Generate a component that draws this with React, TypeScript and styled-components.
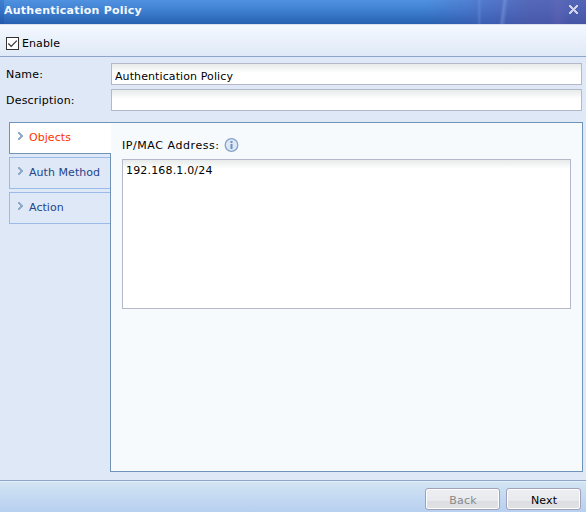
import React, { useState } from "react";
import styled, { createGlobalStyle } from "styled-components";

const Global = createGlobalStyle`
  * { box-sizing: border-box; }
  body { margin: 0; overflow: hidden; }
  body, input, textarea, button { font: 11px/16px "DejaVu Sans", Verdana, sans-serif; color: #000; }
`;

const Dialog = styled.div`
  display: flex;
  flex-direction: column;
  width: 586px;
  height: 512px;
  background: #dfe8f6;
`;

const TitleBar = styled.header`
  flex: none;
  display: flex;
  align-items: flex-start;
  justify-content: space-between;
  height: 24px;
  padding: 2px 7px 0 4px;
  background:
    linear-gradient(97deg, transparent 498px, rgba(160, 190, 245, 0.3) 501px, transparent 505px),
    linear-gradient(90deg, transparent 477px, rgba(140, 170, 230, 0.25) 479px, transparent 482px),
    linear-gradient(90deg, transparent 548px, rgba(140, 110, 190, 0.18) 558px, transparent 569px),
    linear-gradient(90deg, rgba(20, 70, 160, 0.25) 4px, transparent 4px),
    linear-gradient(90deg, transparent 425px, rgba(84, 92, 180, 0.42) 480px, rgba(88, 84, 166, 0.68) 530px, rgba(84, 80, 162, 0.68) 586px),
    linear-gradient(#4f92e0, #3f7fd0 45%, #2660b0);
`;

const Title = styled.h1`
  margin: 0;
  font-size: 11px;
  line-height: 17px;
  letter-spacing: 0.25px;
  color: #f4f8ff;
`;

const CloseButton = styled.button`
  display: flex;
  margin: 2px 0 0;
  padding: 0;
  border: 0;
  background: none;
`;

const Toolbar = styled.div`
  flex: none;
  height: 33px;
  padding: 11px 6px 0;
  border-top: 1px solid #d8e0ee;
  border-bottom: 1px solid #8da6c7;
  background: linear-gradient(#f4f8ff, #dfe9f7);
`;

const CheckLabel = styled.label`
  display: flex;
  gap: 3px;
  line-height: 15px;
  letter-spacing: 0.1px;
`;

const CheckBox = styled.button`
  display: flex;
  width: 13px;
  height: 13px;
  margin-top: 1px;
  padding: 0;
  border: 1px solid #333;
  background: #fff;
`;

const Form = styled.div`
  flex: none;
  display: grid;
  grid-template-columns: 105px 471px;
  grid-auto-rows: 22px;
  row-gap: 4px;
  padding: 6px 0 0 6px;
`;

const FieldLabel = styled.label`
  padding-top: 1px;
  line-height: 22px;
  letter-spacing: 0.2px;
`;

const Field = styled.input`
  width: 100%;
  height: 22px;
  padding: 4px 3px 0;
  border: 1px solid #b5b8c8;
  border-radius: 0;
  outline: none;
  letter-spacing: 0.1px;
  background: linear-gradient(#e7ebea, #fff 9px);
`;

const Body = styled.div`
  flex: none;
  display: flex;
  height: 350px;
  margin: 11px 3px 0 9px;
`;

const Tabs = styled.nav`
  z-index: 1;
  display: flex;
  flex-direction: column;
  gap: 3px;
  width: 102px;
  margin-right: -1px;
`;

const Tab = styled.button<{ $active: boolean }>`
  display: flex;
  align-items: flex-start;
  gap: 6px;
  width: ${p => (p.$active ? 102 : 101)}px;
  height: 32px;
  padding: 7px 0 0 8px;
  border: 1px solid ${p => (p.$active ? "#7093b8" : "#99bbe8")};
  border-right: 0;
  background: ${p => (p.$active ? "#fff" : "#dfe8f6")};
  color: ${p => (p.$active ? "#ff3300" : "#23458b")};
  letter-spacing: 0.05px;
  white-space: nowrap;
`;

const Panel = styled.section`
  flex: 1;
  border: 1px solid #7093b8;
  background: #f6fafd;
  padding: 14px 11px 0;
`;

const PanelLabel = styled.div`
  display: flex;
  align-items: center;
  gap: 4px;
  height: 16px;
`;

const PanelCaption = styled.span`
  padding-top: 1px;
  letter-spacing: 0.57px;
`;

const Addresses = styled.textarea`
  display: block;
  width: 449px;
  height: 150px;
  margin-top: 6px;
  padding: 3px 3px;
  border: 1px solid #b5b8c8;
  outline: none;
  resize: none;
  letter-spacing: 0.17px;
  background: linear-gradient(#e7ebea, #fff 9px);
`;

const Footer = styled.footer`
  flex: none;
  display: flex;
  justify-content: flex-end;
  gap: 6px;
  height: 32px;
  margin-top: 8px;
  padding: 6px 5px 0 0;
  border-top: 1px solid #8da6c7;
  background: linear-gradient(#e5f0fa 1px, #d3e5f3 1px, #c5daf2 15px, #b8d0f0);
`;

const FooterButton = styled.button`
  width: 75px;
  height: 22px;
  margin-top: 1px;
  padding: 3px 0 0 1px;
  border: 1px solid #a0a0b8;
  border-radius: 3px;
  box-shadow: inset 0 0 0 1px #fff;
  letter-spacing: 0.15px;
  background: linear-gradient(#ededf3, #e9eaee 58%, #dcdee2 59%, #e1e2e5);
  &:disabled { color: #888; }
`;

const Arrow = styled.svg`
  display: block;
  margin-top: 2px;
`;

const TabArrow = () => (
  <Arrow width="5" height="9" viewBox="0 0 5 9" shapeRendering="crispEdges">
    <path d="M0 0h2v1h1v1h1v1h1v2h-1v1h-1v1h-1v1h-2v-2h1v-1h1v-2h-1v-1h-1z" fill="#93abcb" />
  </Arrow>
);

const InfoIcon = () => (
  <svg width="15" height="14" viewBox="0 0 15 14">
    <circle cx="7.5" cy="7" r="6.3" fill="#dce8f6" stroke="#86a2c9" strokeWidth="1.3" />
    <path d="M6.5 3h2v2h-2zM6.5 6h2v5h-2z" fill="#6c8fbd" />
  </svg>
);

const tabs = ["Objects", "Auth Method", "Action"];

export default function App() {
  const [enabled, setEnabled] = useState(true);
  const [active, setActive] = useState("Objects");
  return (
    <>
      <Global />
      <Dialog>
        <TitleBar>
          <Title>Authentication Policy</Title>
          <CloseButton aria-label="Close">
            <svg width="11" height="11" viewBox="0 0 11 11" shapeRendering="crispEdges">
              <path
                d="M1 1h2v1h1v1h1v1h1v-1h1v-1h1v-1h2v2h-1v1h-1v1h-1v1h1v1h1v1h1v2h-2v-1h-1v-1h-1v-1h-1v1h-1v1h-1v1h-2v-2h1v-1h1v-1h1v-1h-1v-1h-1v-1h-1z"
                fill="#d0d2ea"
              />
            </svg>
          </CloseButton>
        </TitleBar>
        <Toolbar>
          <CheckLabel>
            <CheckBox role="checkbox" aria-checked={enabled} onClick={() => setEnabled(!enabled)}>
              {enabled && (
                <svg width="11" height="11" viewBox="0 0 11 11">
                  <path d="M1.3 5.5L4.2 8.4L9.8 2.6" fill="none" stroke="#333" strokeWidth="1.2" />
                </svg>
              )}
            </CheckBox>
            Enable
          </CheckLabel>
        </Toolbar>
        <Form>
          <FieldLabel htmlFor="name">Name:</FieldLabel>
          <Field id="name" defaultValue="Authentication Policy" />
          <FieldLabel htmlFor="description">Description:</FieldLabel>
          <Field id="description" />
        </Form>
        <Body>
          <Tabs>
            {tabs.map(name => (
              <Tab key={name} $active={name === active} onClick={() => setActive(name)}>
                <TabArrow />
                {name}
              </Tab>
            ))}
          </Tabs>
          <Panel>
            <PanelLabel>
              <PanelCaption>IP/MAC Address:</PanelCaption>
              <InfoIcon />
            </PanelLabel>
            <Addresses defaultValue="192.168.1.0/24" spellCheck={false} />
          </Panel>
        </Body>
        <Footer>
          <FooterButton disabled>Back</FooterButton>
          <FooterButton>Next</FooterButton>
        </Footer>
      </Dialog>
    </>
  );
}
